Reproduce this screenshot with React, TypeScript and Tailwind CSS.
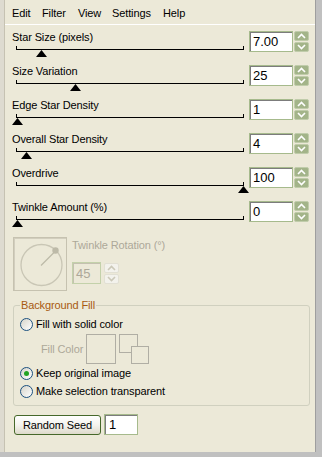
import React from "react";

const rows = [
  { label: "Star Size (pixels)", value: "7.00", pos: 25 },
  { label: "Size Variation", value: "25", pos: 59 },
  { label: "Edge Star Density", value: "1", pos: 1 },
  { label: "Overall Star Density", value: "4", pos: 10 },
  { label: "Overdrive", value: "100", pos: 227 },
  { label: "Twinkle Amount (%)", value: "0", pos: 1 },
];

function Caret({ up, color }: { up: boolean; color: string }) {
  return (
    <svg width="9" height="6" viewBox="0 0 9 6">
      <polyline
        points={up ? "1,5 4.5,1.5 8,5" : "1,1 4.5,4.5 8,1"}
        fill="none"
        stroke={color}
        strokeWidth="1.6"
      />
    </svg>
  );
}

function Spinner({ disabled }: { disabled?: boolean }) {
  const btn = disabled
    ? "h-[10px] w-[15px] flex items-center justify-center rounded-[2px] border border-[#e2e0d4] bg-[#f3f2ec]"
    : "h-[10px] w-[15px] flex items-center justify-center rounded-[2px] border border-[#c0ccaa] bg-[#a3b489]";
  const c = disabled ? "#cbc8b8" : "#ffffff";
  return (
    <div className="flex flex-col gap-[1px]">
      <div className={btn}>
        <Caret up color={c} />
      </div>
      <div className={btn}>
        <Caret up={false} color={c} />
      </div>
    </div>
  );
}

function Radio({ checked }: { checked?: boolean }) {
  return (
    <div className="w-[13px] h-[13px] rounded-full border border-[#1c5180] bg-gradient-to-br from-[#d6d4ca] to-white flex items-center justify-center shrink-0">
      {checked && <div className="w-[5px] h-[5px] rounded-full bg-[#22a322]" />}
    </div>
  );
}

export default function App() {
  return (
    <div className="w-[322px] h-[457px] bg-[#c0c0c0] flex font-['Liberation_Sans',Arial,sans-serif] text-[11px] tracking-[-0.12px] text-black">
      <div className="w-[5px] h-[452px] bg-[#dedbd0] border-r border-[#c6c2b2]" />
      <div className="w-[311px] h-[452px] bg-[#ece9d8] border-r border-[#9e9e9e] flex flex-col">
        {/* menu bar */}
        <div className="h-[25px] border-b border-white flex pl-[7px] pt-[7px] leading-[13px]">
          <span className="w-[30px]">Edit</span>
          <span className="w-[36px]">Filter</span>
          <span className="w-[34px]">View</span>
          <span className="w-[51px]">Settings</span>
          <span>Help</span>
        </div>

        <div className="flex flex-col pl-[7px] pt-[4px]">
          {rows.map((r) => (
            <div key={r.label} className="flex h-[34px]">
              <div className="w-[232px] flex flex-col">
                <div className="mt-[2px] h-[13px] leading-[13px]">{r.label}</div>
                <div className="relative ml-[4px] w-[228px] h-[14px]">
                  <div className="mt-[2px] h-[4px] border-l border-r border-b border-black" />
                  <svg
                    className="absolute top-[6px]"
                    style={{ left: r.pos - 5 }}
                    width="11"
                    height="7"
                    viewBox="0 0 11 7"
                  >
                    <polygon points="5.5,0 11,7 0,7" fill="#000" />
                  </svg>
                </div>
              </div>
              <div className="ml-[5px] mt-[2px] flex gap-[1px]">
                <div className="w-[44px] h-[21px] border border-[#a6ba8c] bg-white shadow-[inset_1px_1px_0_#7c7c7c] pl-[3px] pt-[1px] text-[13px] leading-[18px] tracking-normal">
                  {r.value}
                </div>
                <Spinner />
              </div>
            </div>
          ))}

          {/* twinkle rotation (disabled) */}
          <div className="flex mt-[4px]">
            <div className="ml-[1px] w-[54px] h-[54px] border border-[#c6c2b0] shadow-[inset_1px_1px_0_#d2cebe] flex items-center justify-center">
              <svg width="50" height="50" viewBox="0 0 50 50">
                <circle cx="26.5" cy="26" r="20.5" fill="none" stroke="#c9c6b5" strokeWidth="1.3" />
                <line x1="26" y1="26.5" x2="40" y2="12.5" stroke="#bdbaa8" strokeWidth="1.3" />
                <circle cx="40.5" cy="11.5" r="3.2" fill="#bdbaa8" />
              </svg>
            </div>
            <div className="ml-[5px] flex flex-col text-[#aca899]">
              <div className="mt-[2px] h-[13px] leading-[13px]">Twinkle Rotation (°)</div>
              <div className="mt-[10px] flex">
                <div className="w-[29px] h-[22px] border border-[#c3d1aa] bg-[#ece9d8] shadow-[inset_1px_1px_0_#c4c1b0] pl-[3px] pt-[1px] text-[13px] leading-[19px] tracking-normal">
                  45
                </div>
                <div className="ml-[3px] mt-[1px]">
                  <Spinner disabled />
                </div>
              </div>
            </div>
          </div>

          {/* background fill group */}
          <div className="relative ml-[1px] mt-[14px] w-[297px] border border-[#d0d0bf] rounded-[3px] pt-[12px] pb-[7px] pl-[6px] flex flex-col">
            <div className="absolute left-[6px] top-[-7px] px-[1px] bg-[#ece9d8] text-[#a85a10] leading-[13px]">
              Background Fill
            </div>
            <div className="flex items-center h-[13px] gap-[3px] leading-[13px]">
              <Radio />
              <span>Fill with solid color</span>
            </div>
            <div className="flex items-center mt-[3px]">
              <span className="ml-[21px] w-[45px] text-[#aca899]">Fill Color</span>
              <div className="w-[30px] h-[30px] border border-[#b0aea4]" />
              <div className="relative ml-[3px] w-[30px] h-[30px]">
                <div className="absolute left-0 top-0 w-[19px] h-[19px] border border-[#b0aea4]" />
                <div className="absolute left-[12px] top-[12px] w-[18px] h-[18px] border border-[#b0aea4] bg-[#ece9d8]" />
              </div>
            </div>
            <div className="flex items-center h-[13px] gap-[3px] mt-[3px] leading-[13px]">
              <Radio checked />
              <span>Keep original image</span>
            </div>
            <div className="flex items-center h-[13px] gap-[3px] mt-[5px] leading-[13px]">
              <Radio />
              <span>Make selection transparent</span>
            </div>
          </div>

          {/* random seed */}
          <div className="flex items-start mt-[9px] ml-[2px]">
            <div className="w-[87px] h-[20px] rounded-[3px] border border-[#46682a] bg-gradient-to-b from-white via-[#f4f3ee] to-[#dedacb] flex items-center justify-center leading-[13px]">
              Random Seed
            </div>
            <div className="ml-[3px] mt-[-1px] w-[34px] h-[21px] border border-[#a6ba8c] bg-white shadow-[inset_1px_1px_0_#7c7c7c] pl-[4px] pt-[1px] text-[13px] leading-[18px] tracking-normal">
              1
            </div>
          </div>
        </div>
      </div>
    </div>
  );
}
